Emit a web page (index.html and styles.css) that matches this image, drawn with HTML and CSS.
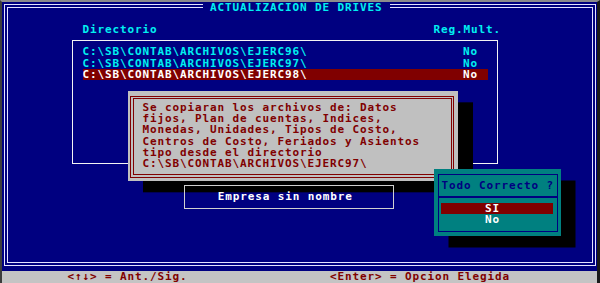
FILE: index.html
```html
<!DOCTYPE html>
<html lang="es">
  <head>
    <meta charset="UTF-8" />
    <meta name="viewport" content="width=device-width, initial-scale=1.0" />
    <title>Actualizacion de Drives</title>
    <link rel="stylesheet" href="styles.css">
  </head>
  <body>
    <div class="screen">
      <div class="desk">
        <div class="frame">
          <div class="frame-in">
            <div class="heads">
              <span>Directorio</span>
              <span>Reg.Mult.</span>
            </div>
            <div class="list">
              <div class="row"><span>C:\SB\CONTAB\ARCHIVOS\EJERC96\</span><span>No</span></div>
              <div class="row"><span>C:\SB\CONTAB\ARCHIVOS\EJERC97\</span><span>No</span></div>
              <div class="row sel"><span>C:\SB\CONTAB\ARCHIVOS\EJERC98\</span><span>No</span></div>
            </div>
          </div>
        </div>
      </div>
      <div class="status">
        <span>&lt;↑↓&gt; = Ant./Sig.</span>
        <span>&lt;Enter&gt; = Opcion Elegida</span>
      </div>

      <!-- ventanas encima -->
      <div class="title">ACTUALIZACION DE DRIVES</div>

      <div class="msg">
        <div class="msg-frame">
          <div class="msg-in">
            Se copiaran los archivos de: Datos<br>
            fijos, Plan de cuentas, Indices,<br>
            Monedas, Unidades, Tipos de Costo,<br>
            Centros de Costo, Feriados y Asientos<br>
            tipo desde el directorio<br>
            C:\SB\CONTAB\ARCHIVOS\EJERC97\
          </div>
        </div>
      </div>

      <div class="empresa">Empresa sin nombre</div>

      <div class="confirm">
        <div class="confirm-in">
          <div class="ask">Todo Correcto ?</div>
          <div class="opts">
            <div class="opt sel">SI</div>
            <div class="opt">No</div>
          </div>
        </div>
      </div>
    </div>
  </body>
</html>
```

FILE: styles.css
```css
* {
  box-sizing: border-box;
}

body {
  margin: 0;
  background: #000;
  font-family: "DejaVu Sans Mono", "Liberation Mono", monospace;
  font-weight: bold;
  font-size: 11px;
  letter-spacing: 0.88px;
  line-height: 11.32px;
  white-space: nowrap;
}

.screen {
  position: relative;
  display: flex;
  flex-direction: column;
  width: 600px;
  height: 283px;
  background: #000080;
  border-top: 2px solid #8c8c8c;
  border-left: 2px solid #3c3c3c;
  border-right: 3px solid #1a1a1a;
}

.desk {
  flex: 1;
  display: flex;
  padding: 2px 1px 5px 2px;
}

.frame {
  flex: 1;
  display: flex;
  border: 1px solid #e4e4ff;
  padding: 2px;
}

.frame-in {
  flex: 1;
  border: 1px solid #e4e4ff;
}

.heads {
  display: grid;
  grid-template-columns: 351px auto;
  margin-top: 15.6px;
  padding-left: 74.5px;
  color: #00f0f0;
}

.list {
  width: 426px;
  height: 124px;
  margin: 5px 0 0 64px;
  border: 1px solid #f4f4f4;
  padding: 5.3px 0 0 9.5px;
}

.row {
  width: 405px;
  display: grid;
  grid-template-columns: 380.5px auto;
  color: #00f0f0;
}

.row.sel {
  background: #800000;
  color: #fff;
}

.status {
  height: 12px;
  display: grid;
  grid-template-columns: 262.5px auto;
  padding-left: 65.5px;
  line-height: 11px;
  background: #c4c4c4;
  color: #800000;
}

.title {
  position: absolute;
  left: 200.5px;
  top: 0;
  width: 187.5px;
  text-align: center;
  background: #000080;
  color: #00f0f0;
}

.msg {
  position: absolute;
  left: 125.5px;
  top: 88.6px;
  width: 330px;
  height: 90.5px;
  display: flex;
  padding: 5.4px 3.5px 3.6px 2.5px;
  background: #c0c0c0;
  box-shadow: 15px 11.32px 0 #000;
}

.msg-frame {
  flex: 1;
  display: flex;
  border: 1px solid #800000;
  padding: 1.5px;
}

.msg-in {
  flex: 1;
  border: 1px solid #800000;
  padding: 2.2px 0 0 9px;
  color: #800000;
}

.empresa {
  position: absolute;
  left: 181.5px;
  top: 183px;
  width: 210px;
  height: 23.5px;
  border: 1px solid #d0d0d0;
  padding: 5.3px 0 0 33.2px;
  color: #fff;
}

.confirm {
  position: absolute;
  left: 432.3px;
  top: 167.3px;
  width: 126.4px;
  height: 66.7px;
  display: flex;
  padding: 5px 3px 4.3px 3.4px;
  background: #008080;
  box-shadow: 14.5px 11.5px 0 #000;
}

.confirm-in {
  flex: 1;
  border: 1px solid #000080;
}

.ask {
  padding: 4.6px 0 4.75px;
  text-align: center;
  color: #000080;
  border-bottom: 2px solid #000080;
}

.opts {
  padding: 4.7px 3.4px 0 2.3px;
}

.opt {
  height: 11.32px;
  padding-left: 44px;
  color: #fff;
}

.opt.sel {
  background: #800000;
}
```
